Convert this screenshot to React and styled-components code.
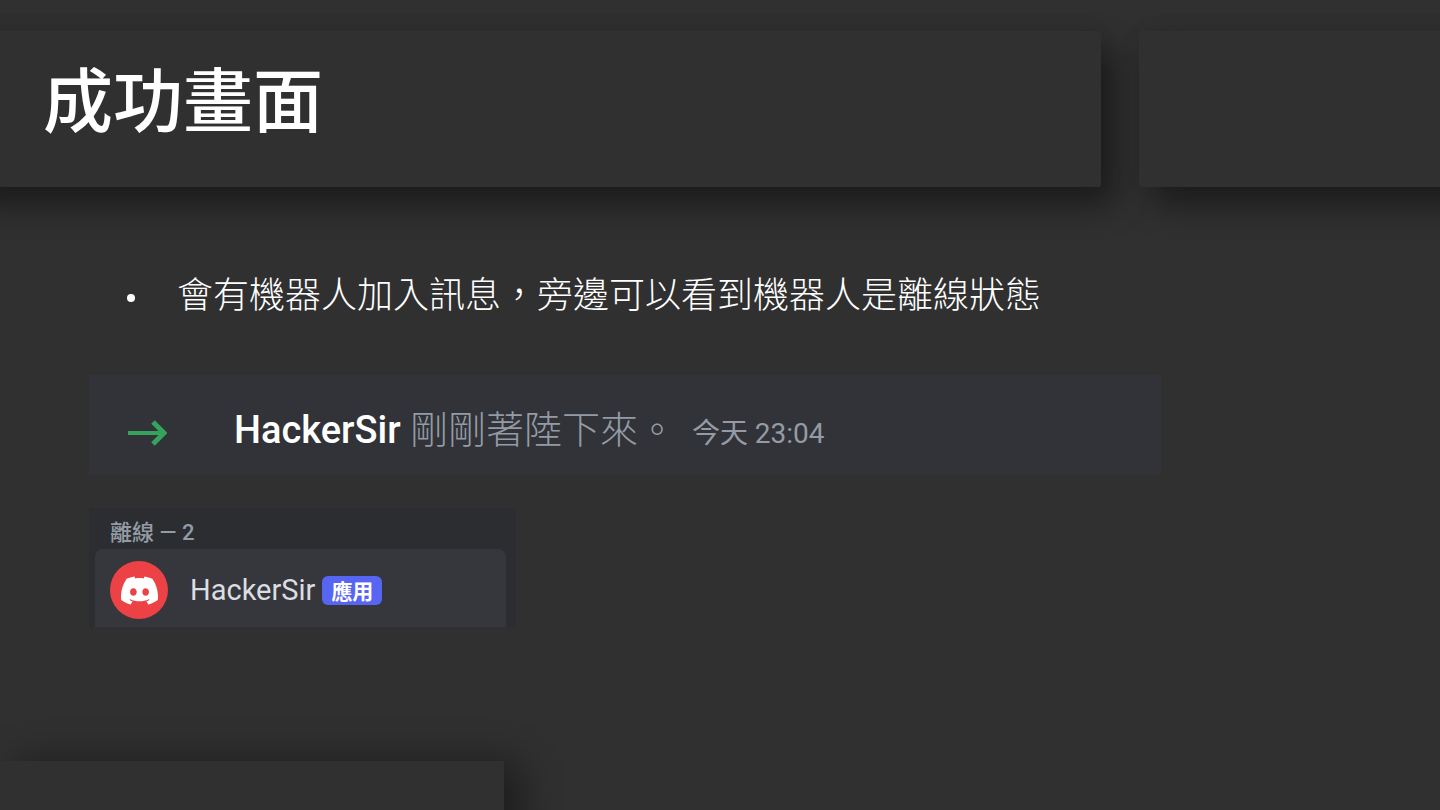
import React from 'react';
import styled, { createGlobalStyle } from 'styled-components';
import { SiDiscord } from 'react-icons/si';

const GlobalStyle = createGlobalStyle`
  * {
    box-sizing: border-box;
  }

  body {
    margin: 0;
    background: #303030;
    font-family: 'Noto Sans CJK TC', 'Noto Sans', sans-serif;
  }
`;

const Slide = styled.div`
  min-height: 100vh;
  display: flex;
  flex-direction: column;
  overflow: hidden;
  background: #303030;
  color: #fff;
`;

const Header = styled.header`
  display: grid;
  grid-template-columns: 10fr 3fr;
  gap: 38px;
  margin: 31px -41px 0;
`;

const Panel = styled.div`
  min-height: 156px;
  padding: 16px 84px;
  background: #303030;
  border-radius: 3px;
  box-shadow:
    14px 18px 32px rgba(0, 0, 0, 0.42),
    0 -2px 20px -4px rgba(0, 0, 0, 0.1);
`;

const Title = styled.h1`
  margin: 0;
  font-size: 70px;
  font-weight: 500;
  line-height: 100px;
`;

const Content = styled.main`
  display: flex;
  flex-direction: column;
  padding: 78px 89px 32px;
`;

const Points = styled.ul`
  margin: 0 0 56px;
  padding: 0 0 0 38px;
  list-style: none;
`;

const Point = styled.li`
  display: flex;
  align-items: center;
  gap: 42px;
  font-size: 36px;
  font-weight: 300;
  line-height: 54px;

  &::before {
    content: '';
    width: 8px;
    height: 8px;
    margin-top: 12px;
    border-radius: 50%;
    background: #fff;
  }
`;

const Message = styled.section`
  display: flex;
  align-items: center;
  width: 100%;
  max-width: 1072px;
  min-height: 100px;
  margin-bottom: 33px;
  padding: 14px 38px 0;
  background: #313338;
`;

const Arrow = styled.svg`
  width: 40px;
  height: 28px;
  margin-top: 2px;
  margin-right: 67px;
  fill: none;
  stroke: #35a35b;
`;

const MessageText = styled.p`
  margin: 0;
  color: #949ba4;
  font-family: Roboto, 'Noto Sans CJK TC', sans-serif;
  font-size: 38px;
  font-weight: 300;
  line-height: 56px;
`;

const Author = styled.strong`
  color: #fff;
  font-weight: 500;
`;

const Time = styled.time`
  margin-left: 16px;
  font-size: 28px;
  font-weight: 400;
`;

const Members = styled.section`
  width: 100%;
  max-width: 427px;
  padding: 8px 10px 0 6px;
  background: #2b2d31;
`;

const GroupName = styled.h2`
  margin: 0;
  padding-left: 15px;
  color: #949ba4;
  font-family: Roboto, 'Noto Sans CJK TC', sans-serif;
  font-size: 22px;
  font-weight: 500;
  line-height: 33px;
`;

const Member = styled.div`
  display: flex;
  align-items: center;
  height: 78px;
  padding: 4px 15px 0;
  border-radius: 8px 8px 0 0;
  background: #35373c;
`;

const Avatar = styled.div`
  display: flex;
  align-items: center;
  justify-content: center;
  width: 58px;
  height: 58px;
  margin-right: 22px;
  border-radius: 50%;
  background: #ed4245;
  color: #fff;
`;

const Name = styled.span`
  color: #dbdee1;
  font-family: Roboto, 'Noto Sans CJK TC', sans-serif;
  font-size: 29px;
  line-height: 40px;
`;

const Tag = styled.span`
  margin-left: 7px;
  padding: 0 9px;
  border-radius: 6px;
  background: #5865f2;
  color: #fff;
  font-size: 21px;
  font-weight: 700;
  line-height: 29px;
`;

const Footer = styled.footer`
  width: 35%;
  height: 109px;
  margin-top: auto;
  margin-bottom: -60px;
  background: #303030;
  box-shadow: 16px 2px 40px rgba(0, 0, 0, 0.42);
`;

const points = ['會有機器人加入訊息，旁邊可以看到機器人是離線狀態'];

function App() {
  return (
    <Slide>
      <GlobalStyle />
      <Header>
        <Panel>
          <Title>成功畫面</Title>
        </Panel>
        <Panel />
      </Header>

      <Content>
        <Points>
          {points.map((point) => (
            <Point key={point}>{point}</Point>
          ))}
        </Points>

        <Message>
          <Arrow viewBox="0 0 40 28" aria-hidden="true">
            <path d="M1 14H37" strokeWidth="4" />
            <path d="M26 3L37 14L26 25" strokeWidth="5" />
          </Arrow>
          <MessageText>
            <Author>HackerSir</Author> 剛剛著陸下來。
            <Time>今天 23:04</Time>
          </MessageText>
        </Message>

        <Members>
          <GroupName>離線 — 2</GroupName>
          <Member>
            <Avatar>
              <SiDiscord size={37} />
            </Avatar>
            <Name>HackerSir</Name>
            <Tag>應用</Tag>
          </Member>
        </Members>
      </Content>

      <Footer />
    </Slide>
  );
}

export default App;
